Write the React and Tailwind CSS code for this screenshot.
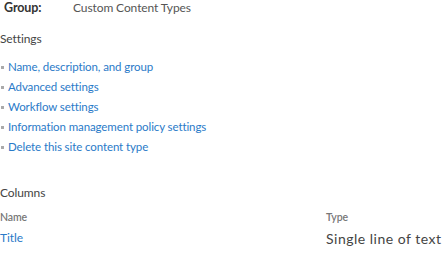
import React from 'react';

const settings = [
    'Name, description, and group',
    'Advanced settings',
    'Workflow settings',
    'Information management policy settings',
    'Delete this site content type',
];

export default function App() {
    return (
        <div className="w-[444px] h-[253px] overflow-hidden bg-white text-[#444] font-['Lato',sans-serif] text-[11.5px] tracking-[-0.1px]">
            {/* Group row */}
            <div className="flex items-center h-[16px] pl-[4px] leading-[16px]">
                <span className="w-[69px] font-bold text-[12.5px] text-[#333]">Group:</span>
                <span className="text-[#555] text-[12px]">Custom Content Types</span>
            </div>

            {/* Settings */}
            <div className="mt-[15px] leading-[16px] text-[12px] text-[#444]">Settings</div>
            <ul className="mt-[10px] flex flex-col">
                {settings.map((s) => (
                    <li key={s} className="flex items-center h-[20px]">
                        <span className="w-[3px] h-[3px] bg-[#aaa] ml-[1px] mr-[4px]" />
                        <span className="text-[#2a7ac8]">{s}</span>
                    </li>
                ))}
            </ul>

            {/* Columns */}
            <div className="mt-[28px] leading-[16px] text-[12px]">Columns</div>
            <div className="mt-[10px] flex text-[10.5px] text-[#777] font-semibold h-[14px] items-center">
                <span className="w-[326px]">Name</span>
                <span>Type</span>
            </div>
            <div className="mt-[5px] flex h-[16px] items-center">
                <span className="w-[326px] text-[12px] text-[#2a7ac8]">Title</span>
                <span className="text-[14px] tracking-[0.5px] text-[#444] whitespace-nowrap">Single line of text</span>
            </div>
        </div>
    );
}
